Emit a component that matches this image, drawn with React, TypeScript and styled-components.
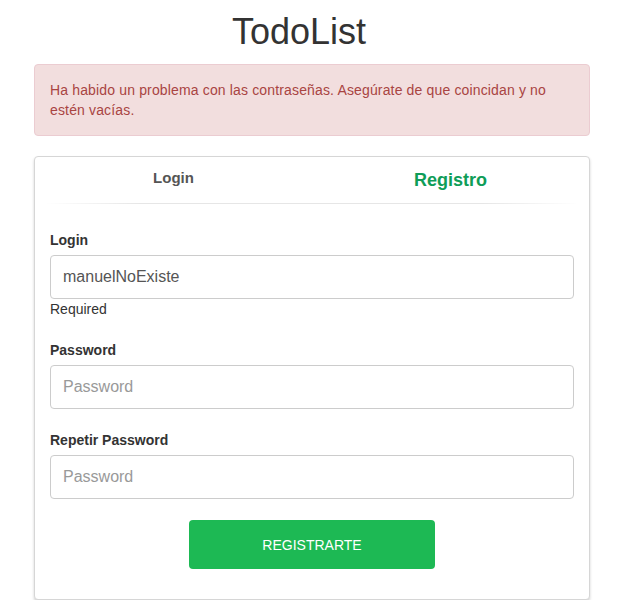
import React from "react";
import styled, { createGlobalStyle } from "styled-components";

const GlobalStyle = createGlobalStyle`
  * { box-sizing: border-box; }
  html, body { margin: 0; padding: 0; background: #fff; }
  body {
    font-family: "Liberation Sans", Helvetica, Arial, sans-serif;
    font-size: 14px;
    line-height: 20px;
    color: #333;
  }
`;

const Page = styled.div`
  width: 556px;
  margin: 0 auto;
  padding-top: 12px;
`;

const Title = styled.h1`
  margin: 0 0 12px;
  padding-right: 26px;
  font-size: 36px;
  line-height: 40px;
  font-weight: 400;
  text-align: center;
  color: #333;
`;

const Alert = styled.div`
  padding: 15px;
  border: 1px solid #ebccd1;
  border-radius: 4px;
  background: #f2dede;
  color: #a94442;
  letter-spacing: 0.15px;
  margin-bottom: 20px;
`;

const Card = styled.div`
  border: 1px solid #d6d6d6;
  border-radius: 4px;
  background: #fff;
  box-shadow: 0 2px 3px rgba(0, 0, 0, 0.18);
`;

const Tabs = styled.div`
  display: flex;
  align-items: flex-start;
  padding: 11px 0 10px;
`;

const Tab = styled.div<{ $active?: boolean }>`
  flex: 1;
  text-align: center;
  font-weight: 700;
  font-size: ${(p) => (p.$active ? "18px" : "15px")};
  line-height: ${(p) => (p.$active ? "25px" : "20px")};
  color: ${(p) => (p.$active ? "#0f9d58" : "#555")};
  cursor: pointer;
`;

const Divider = styled.div`
  height: 1px;
  margin: 0 10px;
  background: linear-gradient(
    to right,
    rgba(225, 225, 225, 0) 0%,
    #e6e6e6 18%,
    #e6e6e6 82%,
    rgba(225, 225, 225, 0) 100%
  );
`;

const Form = styled.form`
  padding: 26px 15px 30px;
  display: flex;
  flex-direction: column;
`;

const Group = styled.div`
  display: flex;
  flex-direction: column;
  margin-bottom: 21px;
`;

const Label = styled.label`
  font-weight: 700;
  margin-bottom: 5px;
  color: #333;
`;

const Input = styled.input`
  height: 44px;
  width: 100%;
  padding: 10px 12px;
  font-family: inherit;
  font-size: 16px;
  color: #555;
  border: 1px solid #ccc;
  border-radius: 4px;
  background: #fff;
  outline: none;
  &::placeholder { color: #999; }
`;

const Help = styled.div`
  color: #333;
`;

const Button = styled.button`
  align-self: center;
  width: 246px;
  height: 49px;
  border: none;
  border-radius: 4px;
  background: #1db954;
  color: #fff;
  font-family: inherit;
  font-size: 14px;
  cursor: pointer;
`;

export default function App() {
  return (
    <>
      <GlobalStyle />
      <Page>
        <Title>TodoList</Title>
        <Alert>
          Ha habido un problema con las contraseñas. Asegúrate de que coincidan y no estén vacías.
        </Alert>
        <Card>
          <Tabs>
            <Tab>Login</Tab>
            <Tab $active>Registro</Tab>
          </Tabs>
          <Divider />
          <Form onSubmit={(e) => e.preventDefault()}>
            <Group>
              <Label>Login</Label>
              <Input defaultValue="manuelNoExiste" />
              <Help>Required</Help>
            </Group>
            <Group>
              <Label>Password</Label>
              <Input type="password" placeholder="Password" />
            </Group>
            <Group>
              <Label>Repetir Password</Label>
              <Input type="password" placeholder="Password" />
            </Group>
            <Button type="submit">REGISTRARTE</Button>
          </Form>
        </Card>
      </Page>
    </>
  );
}
